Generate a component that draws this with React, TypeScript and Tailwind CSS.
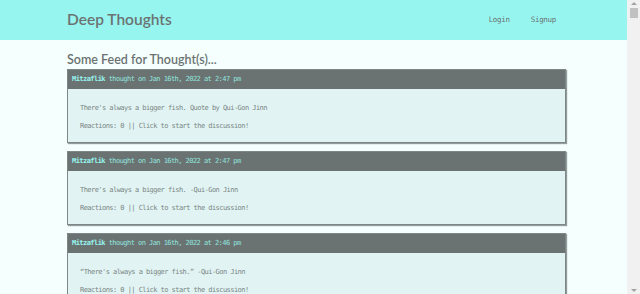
import React from "react";

const thoughts = [
  { user: "Mitzaflik", date: "Jan 16th, 2022 at 2:47 pm", text: "There's always a bigger fish. Quote by Qui-Gon Jinn" },
  { user: "Mitzaflik", date: "Jan 16th, 2022 at 2:47 pm", text: "There's always a bigger fish. -Qui-Gon Jinn" },
  { user: "Mitzaflik", date: "Jan 16th, 2022 at 2:46 pm", text: "\u201CThere's always a bigger fish.\u201D -Qui-Gon Jinn" },
  { user: "Mitzaflik", date: "Jan 16th, 2022 at 2:45 pm", text: "There's always a bigger fish." },
];

const mono = { fontFamily: '"DejaVu Sans Mono", "Liberation Mono", monospace', letterSpacing: "-0.55px" };
const sans = { fontFamily: '"Lato", "Open Sans", sans-serif' };

export default function App() {
  return (
    <div className="flex h-screen overflow-hidden bg-[#f5fffe]">
      <div className="flex-1 min-w-0">
        <header className="h-10 bg-[#97f5f0] flex items-center justify-between pl-[67px] pr-[71px]">
          <h1 className="text-[15.5px] font-semibold text-[#6b7372] leading-none" style={sans}>
            Deep Thoughts
          </h1>
          <nav className="flex gap-[21px] text-[7.5px] text-[#6b7372]" style={{ ...mono, letterSpacing: "-0.3px" }}>
            <span>Login</span>
            <span>Signup</span>
          </nav>
        </header>
        <main className="pl-[67px] pr-[61px]">
          <h2 className="mt-[11px] text-[12.5px] leading-[18px] font-semibold text-[#6b7372]" style={sans}>
            Some Feed for Thought(s)...
          </h2>
          <div className="flex flex-col gap-[8px]">
            {thoughts.map((t, i) => (
              <div key={i} className="border border-[#7d8786] shadow-[1px_1px_1px_rgba(80,90,90,0.6)] bg-[#e1f4f3]">
                <p className="h-[19px] bg-[#6b7372] px-[4px] text-[7px] leading-[19px] text-[#8fe3de] whitespace-nowrap" style={mono}>
                  <span className="font-bold text-[#97f5f0]">{t.user}</span> thought on {t.date}
                </p>
                <div className="pt-[14px] pb-[11px] px-[12px] flex flex-col gap-[8px] text-[7px] text-[#7a8584] leading-[10px]" style={mono}>
                  <p>{t.text}</p>
                  <p>Reactions: 0 || Click to start the discussion!</p>
                </div>
              </div>
            ))}
          </div>
        </main>
      </div>
      <div className="w-[13px] bg-[#f1f1f1] flex flex-col items-center pt-[2px]">
        <div className="w-0 h-0 border-l-[3px] border-r-[3px] border-b-[3px] border-l-transparent border-r-transparent border-b-[#a3a3a3]"></div>
        <div className="mt-[3px] w-[8px] h-[10px] bg-[#c1c1c1]"></div>
        <div className="flex-1"></div>
        <div className="mb-[2px] w-0 h-0 border-l-[3px] border-r-[3px] border-t-[3px] border-l-transparent border-r-transparent border-t-[#a3a3a3]"></div>
      </div>
    </div>
  );
}
